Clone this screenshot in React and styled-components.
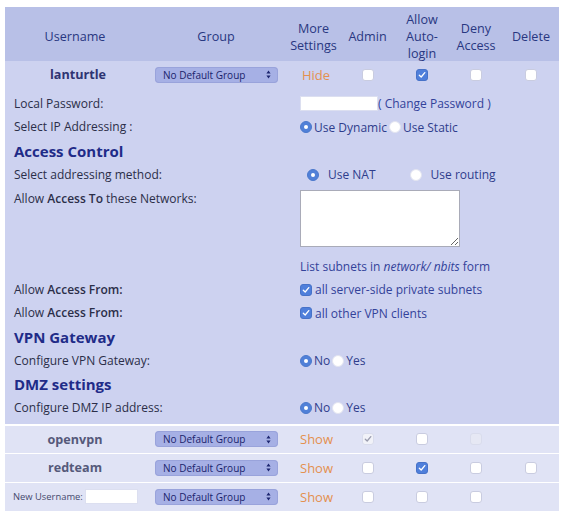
import React from "react";
import styled, { createGlobalStyle } from "styled-components";

const Global = createGlobalStyle`
  html, body { margin: 0; padding: 0; background: #fff; }
  body { font-family: "Open Sans", "DejaVu Sans", sans-serif; }
  * { box-sizing: border-box; }
`;

const COLS = "140px 142px 53px 55px 54px 54px 56px";

const Page = styled.div`
  padding: 7px 0 0 5px;
  width: 566px;
`;

const Table = styled.div`
  width: 554px;
  display: flex;
  flex-direction: column;
  background: #fff;
`;

const HeaderRow = styled.div`
  display: grid;
  grid-template-columns: ${COLS};
  height: 54px;
  padding-top: 4px;
  background: #b8c0e7;
`;

const HeadCell = styled.div`
  display: flex;
  align-items: center;
  justify-content: center;
  text-align: center;
  font-size: 12.6px;
  line-height: 17px;
  color: #283781;
`;

const UserRow = styled.div`
  display: grid;
  grid-template-columns: ${COLS};
  height: ${(p) => p.$h || 27}px;
  align-items: center;
  background: ${(p) => (p.$expanded ? "#cdd2f0" : "#e0e3f5")};
  margin-top: ${(p) => p.$gap || 0}px;
`;

const Cell = styled.div`
  display: flex;
  align-items: center;
  justify-content: ${(p) => p.$align || "center"};
  padding-left: ${(p) => p.$pl || 0}px;
`;

const UserName = styled.span`
  font-size: 12.6px;
  font-weight: 700;
  color: ${(p) => (p.$muted ? "#55597a" : "#2e3472")};
  margin-left: ${(p) => p.$shift || 0}px;
`;

const NewUserLabel = styled.span`
  font-size: 9.4px;
  color: #45496e;
`;

const SmallInput = styled.span`
  display: inline-block;
  width: ${(p) => p.$w}px;
  height: ${(p) => p.$h}px;
  background: #fff;
  border: 1px solid #dcdff0;
  margin-left: ${(p) => p.$ml || 0}px;
`;

const SelectBox = styled.div`
  width: 123px;
  height: 16px;
  border-radius: 4px;
  background: #a6b0e5;
  display: flex;
  align-items: center;
  justify-content: space-between;
  padding: 0 7px 0 8px;
  font-size: 10px;
  color: #1a236c;
  margin-left: 10px;
  box-shadow: inset 0 0 0 1px rgba(140, 150, 210, 0.5);
`;

const ToggleLink = styled.span`
  font-size: 13px;
  color: #e4904f;
`;

const CheckBox = styled.span`
  display: inline-flex;
  align-items: center;
  justify-content: center;
  width: 12px;
  height: 12px;
  border-radius: 3px;
  background: ${(p) =>
    p.$disabled ? (p.$checked ? "#f1f2f8" : "#e6e8f4") : p.$checked ? "#4f7fdb" : "#ffffff"};
  border: 1px solid
    ${(p) => (p.$disabled ? "#d9dcec" : p.$checked ? "#4772c8" : "#c9cce0")};
  margin-right: ${(p) => p.$mr || 0}px;
  flex: none;
`;

const Check = ({ checked, disabled, mr }) => (
  <CheckBox $checked={checked} $disabled={disabled} $mr={mr}>
    {checked && (
      <svg width="8" height="8" viewBox="0 0 8 8">
        <path
          d="M1.3 4.2 L3.2 6 L6.8 1.6"
          fill="none"
          stroke={disabled ? "#9a9cae" : "#fff"}
          strokeWidth="1.3"
          strokeLinecap="round"
          strokeLinejoin="round"
        />
      </svg>
    )}
  </CheckBox>
);

const RadioDot = styled.span`
  display: inline-flex;
  align-items: center;
  justify-content: center;
  width: 12px;
  height: 12px;
  border-radius: 50%;
  background: ${(p) => (p.$on ? "#5080d8" : "#fff")};
  border: 1px solid ${(p) => (p.$on ? "#4a78cc" : "#e2e4f0")};
  flex: none;
  &::after {
    content: "";
    width: 4px;
    height: 4px;
    border-radius: 50%;
    background: #fff;
    display: ${(p) => (p.$on ? "block" : "none")};
  }
`;

const RadioGroup = styled.div`
  display: flex;
  align-items: center;
  gap: ${(p) => (p.$wide ? 34 : 2)}px;
  padding-left: ${(p) => (p.$wide ? 7 : 0)}px;
`;

const RadioOpt = styled.span`
  display: inline-flex;
  align-items: center;
  gap: ${(p) => (p.$wide ? 9 : 2)}px;
  font-size: 12px;
  color: #2f3d8c;
`;

const Details = styled.div`
  background: #cdd2f0;
  padding: 4px 0 4px 9px;
  display: flex;
  flex-direction: column;
`;

const DetailRow = styled.div`
  display: grid;
  grid-template-columns: 286px 1fr;
  height: ${(p) => p.$h || 23.6}px;
  align-items: ${(p) => (p.$top ? "start" : "center")};
  padding-top: ${(p) => (p.$top ? 4 : 0)}px;
`;

const Label = styled.span`
  font-size: 12px;
  line-height: 18px;
  color: #2b2e48;
  b {
    font-weight: 600;
  }
`;

const Heading = styled.span`
  font-size: 15px;
  font-weight: 700;
  color: #1f2b88;
`;

const Value = styled.div`
  display: flex;
  align-items: center;
  font-size: 12px;
  color: #33429a;
  i {
    font-style: italic;
  }
`;

const Area = styled.textarea`
  width: 160px;
  height: 57px;
  border: 1px solid #a9abb8;
  background: #fff;
  resize: both;
  margin: 0;
  padding: 0;
  display: block;
`;

const Arrows = () => (
  <svg width="5" height="9" viewBox="0 0 5 9">
    <path d="M2.5 0.5 L4.6 3.6 L0.4 3.6 Z M2.5 8.5 L4.6 5.4 L0.4 5.4 Z" fill="#1d2670" />
  </svg>
);

const Select = () => (
  <SelectBox>
    <span>No Default Group</span>
    <Arrows />
  </SelectBox>
);

const Radios = ({ options, on, wide }) => (
  <RadioGroup $wide={wide}>
    {options.map((o, i) => (
      <RadioOpt key={o} $wide={wide}>
        <RadioDot $on={i === on} />
        {o}
      </RadioOpt>
    ))}
  </RadioGroup>
);

const Boxes = ({ cells }) =>
  cells.map((c, i) => (
    <Cell key={i}>{c ? <Check checked={c.checked} disabled={c.disabled} /> : null}</Cell>
  ));

export default function App() {
  return (
    <Page>
      <Global />
      <Table>
        <HeaderRow>
          <HeadCell>Username</HeadCell>
          <HeadCell>Group</HeadCell>
          <HeadCell>
            More
            <br />
            Settings
          </HeadCell>
          <HeadCell>Admin</HeadCell>
          <HeadCell>
            Allow
            <br />
            Auto-
            <br />
            login
          </HeadCell>
          <HeadCell>
            Deny
            <br />
            Access
          </HeadCell>
          <HeadCell>Delete</HeadCell>
        </HeaderRow>

        <UserRow $expanded>
          <Cell>
            <UserName $shift={6}>lanturtle</UserName>
          </Cell>
          <Cell $align="flex-start">
            <Select />
          </Cell>
          <Cell $align="flex-start" $pl={15}>
            <ToggleLink>Hide</ToggleLink>
          </Cell>
          <Boxes
            cells={[{ checked: false }, { checked: true }, { checked: false }, { checked: false }]}
          />
        </UserRow>

        <Details>
          <DetailRow>
            <Label>Local Password:</Label>
            <Value>
              <SmallInput $w={78} $h={15} />( Change Password )
            </Value>
          </DetailRow>
          <DetailRow>
            <Label>Select IP Addressing :</Label>
            <Radios options={["Use Dynamic", "Use Static"]} on={0} />
          </DetailRow>
          <DetailRow>
            <Heading>Access Control</Heading>
          </DetailRow>
          <DetailRow>
            <Label>Select addressing method:</Label>
            <Radios options={["Use NAT", "Use routing"]} on={0} wide />
          </DetailRow>
          <DetailRow $h={68} $top>
            <Label>
              Allow <b>Access To</b> these Networks:
            </Label>
            <Area readOnly value="" />
          </DetailRow>
          <DetailRow>
            <span />
            <Value>
              List subnets in&nbsp;<i>network/ nbits</i>&nbsp;form
            </Value>
          </DetailRow>
          <DetailRow>
            <Label>
              Allow <b>Access From:</b>
            </Label>
            <Value>
              <Check checked mr={3} />
              all server-side private subnets
            </Value>
          </DetailRow>
          <DetailRow>
            <Label>
              Allow <b>Access From:</b>
            </Label>
            <Value>
              <Check checked mr={3} />
              all other VPN clients
            </Value>
          </DetailRow>
          <DetailRow>
            <Heading>VPN Gateway</Heading>
          </DetailRow>
          <DetailRow>
            <Label>Configure VPN Gateway:</Label>
            <Radios options={["No", "Yes"]} on={0} />
          </DetailRow>
          <DetailRow>
            <Heading>DMZ settings</Heading>
          </DetailRow>
          <DetailRow>
            <Label>Configure DMZ IP address:</Label>
            <Radios options={["No", "Yes"]} on={0} />
          </DetailRow>
        </Details>

        <UserRow $gap={2}>
          <Cell>
            <UserName $muted>openvpn</UserName>
          </Cell>
          <Cell $align="flex-start">
            <Select />
          </Cell>
          <Cell $align="flex-start" $pl={13}>
            <ToggleLink>Show</ToggleLink>
          </Cell>
          <Boxes cells={[{ checked: true, disabled: true }, { checked: false }, { disabled: true }, null]} />
        </UserRow>

        <UserRow $gap={1} $h={28}>
          <Cell>
            <UserName $muted>redteam</UserName>
          </Cell>
          <Cell $align="flex-start">
            <Select />
          </Cell>
          <Cell $align="flex-start" $pl={13}>
            <ToggleLink>Show</ToggleLink>
          </Cell>
          <Boxes
            cells={[{ checked: false }, { checked: true }, { checked: false }, { checked: false }]}
          />
        </UserRow>

        <UserRow $gap={1} $h={28}>
          <Cell $align="flex-start" $pl={8}>
            <NewUserLabel>New Username:</NewUserLabel>
            <SmallInput $w={53} $h={15} $ml={2} />
          </Cell>
          <Cell $align="flex-start">
            <Select />
          </Cell>
          <Cell $align="flex-start" $pl={13}>
            <ToggleLink>Show</ToggleLink>
          </Cell>
          <Boxes cells={[{ checked: false }, { checked: false }, { checked: false }, null]} />
        </UserRow>
      </Table>
    </Page>
  );
}
